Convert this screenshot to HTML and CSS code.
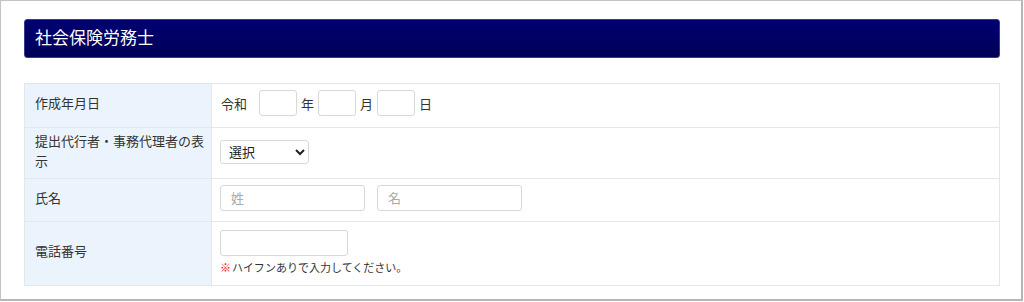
FILE: index.html
```html
<!DOCTYPE html>
<html lang="ja">
<head>
<meta charset="utf-8">
<link rel="stylesheet" href="styles.css">
</head>
<body>
<div class="frame">
  <h2 class="title">社会保険労務士</h2>
  <table class="form">
    <tr class="r1">
      <th>作成年月日</th>
      <td>
        <div class="date">
          <span class="era">令和</span>
          <input class="box" type="text">
          <span>年</span>
          <input class="box" type="text">
          <span>月</span>
          <input class="box" type="text">
          <span>日</span>
        </div>
      </td>
    </tr>
    <tr class="r2">
      <th>提出代行者・事務代理者の表示</th>
      <td>
        <select class="sel"><option>選択</option></select>
      </td>
    </tr>
    <tr class="r3">
      <th>氏名</th>
      <td>
        <div class="names">
          <input class="name" type="text" placeholder="姓">
          <input class="name" type="text" placeholder="名">
        </div>
      </td>
    </tr>
    <tr class="r4">
      <th>電話番号</th>
      <td>
        <input class="tel" type="text">
        <p class="note"><span class="mark">※</span>ハイフンありで入力してください。</p>
      </td>
    </tr>
  </table>
</div>
</body>
</html>
```
FILE: styles.css
```css
* { box-sizing: border-box; }
html, body { margin: 0; padding: 0; background: #fff; }
body {
  font-family: "Noto Sans CJK JP", "Noto Sans", sans-serif;
  color: #333;
  width: 1024px;
  height: 302px;
  overflow: hidden;
}
.frame {
  width: 1023px;
  height: 301px;
  border: 1px solid #c4c4c4;
  border-right: 2px solid #b5b5b5;
  border-bottom: 2px solid #b5b5b5;
  padding: 18px 0 0 23px;
}
.title {
  margin: 0;
  width: 976px;
  height: 39px;
  background: linear-gradient(#000072, #000058);
  border: 1px solid #3a3a8a;
  border-radius: 3px;
  color: #fff;
  font-size: 17px;
  font-weight: normal;
  line-height: 33px;
  padding-left: 10px;
}
.form {
  margin-top: 25px;
  width: 976px;
  border-collapse: collapse;
  font-size: 13px;
}
.form th, .form td {
  border: 1px solid #e6e6e6;
}
.form th {
  width: 187px;
  background: #ebf4fc;
  font-weight: normal;
  text-align: left;
  padding: 0 3px 5px 10px;
  line-height: 20px;
  color: #333;
}
.form td {
  background: #fff;
  padding: 0 8px 4px;
}
.r1 { height: 44px; }
.r2 { height: 51px; }
.r3 { height: 43px; }
.r4 { height: 64px; }
.date {
  display: flex;
  align-items: center;
  gap: 4px;
  padding-left: 1px;
  margin-top: -1px;
}
.era { margin-right: 8px; }
input {
  font-family: inherit;
  font-size: 13px;
  border: 1px solid #d8d8d8;
  border-radius: 3px;
  height: 26px;
  padding: 0 10px;
  outline: none;
  background: #fff;
}
.box { width: 38px; }
input::placeholder { color: #aaa; }
.sel {
  font-family: inherit;
  font-size: 13px;
  color: #222;
  width: 89px;
  height: 24px;
  border: 1px solid #d8d8d8;
  border-radius: 3px;
  background: #fff;
  padding: 0 4px;
  margin-top: 1px;
}
.names { display: flex; gap: 12px; margin-top: -1px; }
.name { width: 145px; }
.tel { width: 128px; display: block; margin-top: 1px; }
.note {
  margin: 3px 0 0;
  font-size: 11px;
  color: #333;
  line-height: 16px;
}
.mark { color: #ff0000; margin-right: 1px; }
```
